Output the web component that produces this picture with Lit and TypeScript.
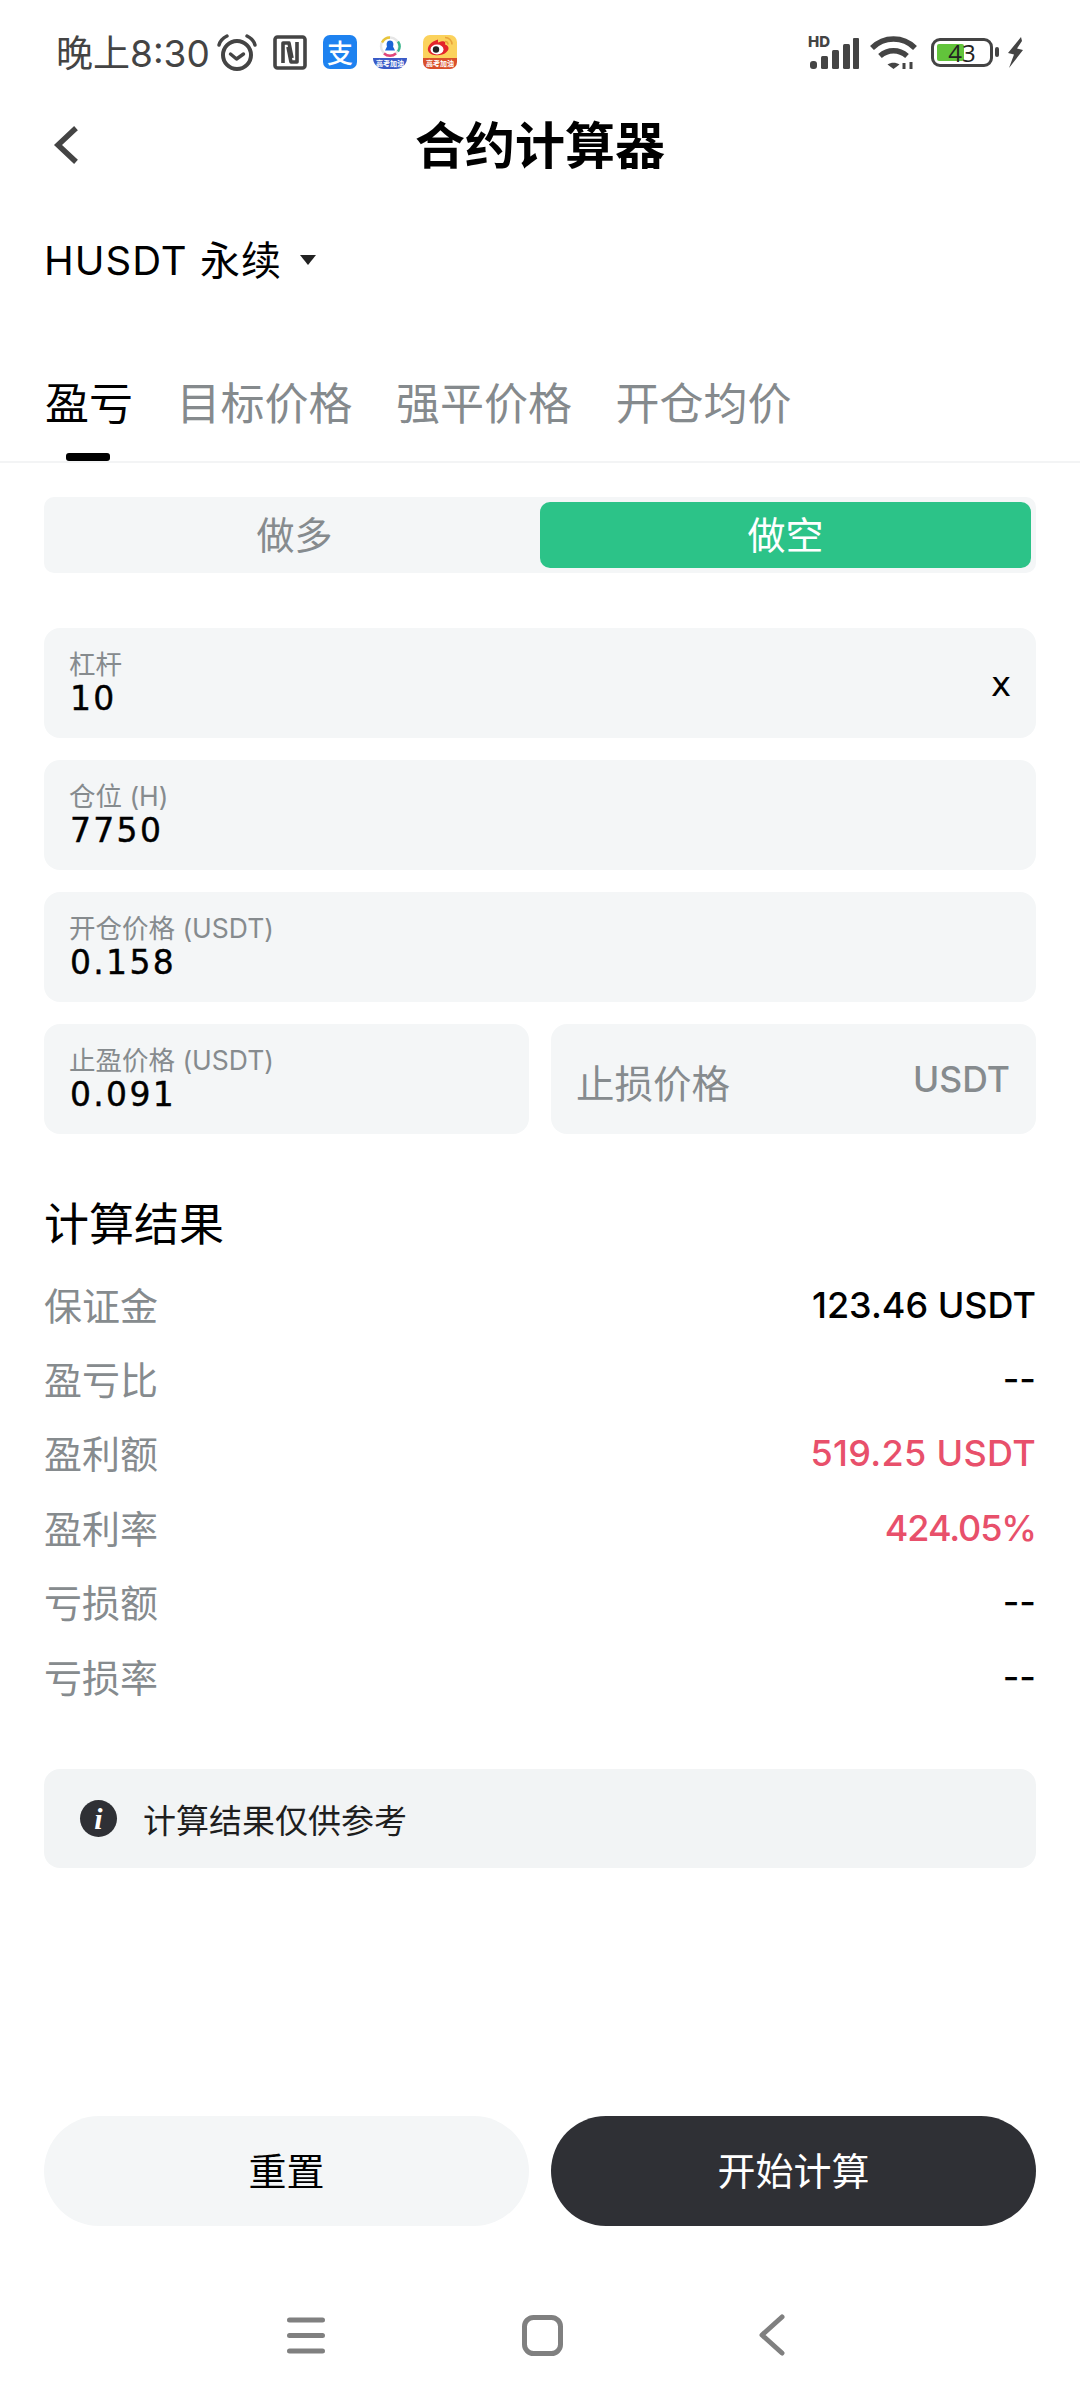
import { LitElement, css, html } from "lit";
import { customElement } from "lit/decorators.js";

const CJK = css`"Noto Sans CJK SC"`;

const alarmIcon = html`<svg width="40" height="37" viewBox="0 0 40 37" fill="none" stroke="#444" stroke-linecap="round">
  <circle cx="20" cy="21" r="14" stroke-width="4"/>
  <path d="M13.500 20l6 5 7-5" stroke-width="3.400" stroke-linejoin="round"/>
  <path d="M2 11c1-4 4-7 8-9M38 11c-1-4-4-7-8-9" stroke-width="3.400"/>
</svg>`;

const nfcIcon = html`<svg width="34" height="35" viewBox="0 0 34 35" fill="none" stroke="#444" stroke-width="3.600" stroke-linejoin="round">
  <rect x="2" y="2" width="30" height="31" rx="2.500"/>
  <path d="M10 28V8h6l3 15"/>
  <path d="M24 7v20h-6l-3-15"/>
</svg>`;

const signalIcon = html`<svg class="signal" width="52" height="36" viewBox="0 -4 52 36" fill="#444">
  <rect x="2" y="24" width="7" height="8" rx="3"/>
  <rect x="13" y="19" width="7" height="13" rx="1.500"/>
  <rect x="24" y="13" width="7" height="19" rx="1.500"/>
  <rect x="35" y="7" width="7" height="25" rx="1.500"/>
  <rect x="45" y="1" width="6" height="31" rx="1"/>
  <text x="0" y="10" font-family="Inter, sans-serif" font-size="15" font-weight="800">HD</text>
</svg>`;

const wifiIcon = html`<svg width="48" height="35" viewBox="0 0 48 35" fill="none" stroke="#444" stroke-width="5.500">
  <path d="M2 13C14 1 33 1 45 13"/>
  <path d="M10 21c8-7 19-7 27 0"/>
  <path d="M23.500 34l-6-4.500c3.500-2.500 8.500-2.500 12 0z" fill="#444" stroke="none"/>
  <path d="M34 28v6M41 27v7" stroke-width="3"/>
</svg>`;

const boltIcon = html`<svg width="17" height="31" viewBox="0 0 17 31" fill="#444">
  <path d="M14 0L1 16l6 1.500L2 31l14-18-6-1.500L15 4z"/>
</svg>`;

@customElement("app-root")
export class AppRoot extends LitElement {
  static styles = css`
    :host {
      display: flex;
      flex-direction: column;
      width: 1080px;
      height: 2400px;
      background: #fff;
      font-family: Inter, ${CJK}, sans-serif;
      color: #000;
    }
    .status {
      height: 104px;
      padding: 0 56px 0 56px;
      display: flex;
      align-items: center;
      box-sizing: border-box;
      color: #444;
    }
    .clock {
      font: 400 37px Inter, ${CJK}, sans-serif;
      width: 161px;
      margin-top: -2px;
      white-space: nowrap;
    }
    .app-icons { display: flex; align-items: center; gap: 16px; }
    .alipay {
      width: 34px; height: 34px; border-radius: 7px; background: #1e82f0;
      color: #fff; font: 500 26px/34px ${CJK}, sans-serif;
      text-align: center;
    }
    .news, .weibo {
      width: 34px; height: 34px; border-radius: 7px;
      display: flex; flex-direction: column; align-items: center; justify-content: flex-end;
      overflow: hidden; font: 700 7px ${CJK}, sans-serif; color: #fff;
    }
    .weibo { background: linear-gradient(#fbd25c 0 68%, #d9502b 68%); }
    .news { background: #fff; }
    .tag { width: 100%; height: 11px; line-height: 11px; text-align: center; white-space: nowrap; }
    .news .tag { background: #3a5bc7; border-radius: 0 0 12px 12px; }
    .sys { margin-left: auto; display: flex; align-items: center; gap: 10px; }
    .signal { margin-top: -3px; }
    .batt-wrap { display: flex; align-items: center; margin-left: 3px; }
    .battery {
      width: 62px; height: 29px; box-sizing: border-box;
      border: 3.500px solid #444; border-radius: 9px; position: relative;
      font: 400 24px "Open Sans", sans-serif; color: #222;
      display: flex; align-items: center; justify-content: center;
    }
    .battery .fill {
      position: absolute; left: 3px; top: 3px; bottom: 3px; width: 27px;
      background: #62c43b; border-radius: 2px;
    }
    .battery span { position: relative; }
    .nub { width: 4px; height: 10px; background: #444; border-radius: 2px; margin: 0 8px 0 2px; }

    .head {
      height: 82px;
      padding: 0 44px;
      display: grid;
      grid-template-columns: 1fr auto 1fr;
      align-items: center;
    }
    .back { margin-left: 7px; }
    .title { font: 700 50px ${CJK}, sans-serif; margin-top: -7px; }
    .symbol {
      margin: 42px 44px 0;
      height: 60px;
      display: flex;
      align-items: center;
      font: 400 40px Inter, ${CJK}, sans-serif;
      letter-spacing: 1px;
    }
    .symbol i {
      margin-left: 18px; margin-top: 4px;
      border: 8px solid transparent; border-top: 10px solid #222; border-bottom: 0;
    }
    .tabs {
      margin-top: 55px;
      height: 120px;
      box-sizing: border-box;
      padding: 0 45px;
      border-bottom: 2px solid #f3f4f5;
      display: flex;
      gap: 43.500px;
      font: 400 44px ${CJK}, sans-serif;
      color: #858a8d;
    }
    .tab { position: relative; height: 118px; line-height: 117px; white-space: nowrap; }
    .tab.on { color: #000; }
    .tab.on::after {
      content: ""; position: absolute; left: 21px; bottom: 0;
      width: 44px; height: 8px; border-radius: 3px; background: #000;
    }
    main { padding: 34px 44px 0; display: flex; flex-direction: column; flex: 1; }
    .toggle {
      height: 76px; padding: 5px 5px; box-sizing: border-box;
      background: #f4f6f7; border-radius: 10px;
      display: grid; grid-template-columns: 1fr 1fr;
      font: 400 38px ${CJK}, sans-serif; color: #868b8e; text-align: center;
    }
    .toggle div { line-height: 62px; height: 66px; border-radius: 10px; }
    .toggle .on { background: #2cc388; color: #fff; }
    .fields {
      margin-top: 55px;
      display: grid; grid-template-columns: 485px 485px; gap: 22px;
    }
    .field {
      height: 110px; box-sizing: border-box; padding: 21px 26px 0 25px;
      background: #f4f6f7; border-radius: 16px; position: relative;
    }
    .wide { grid-column: 1 / 3; }
    .lbl { font: 400 26.500px/30px Inter, ${CJK}, sans-serif; color: #868b8e; }
    .val {
      font: 400 33px/36px "DejaVu Sans", sans-serif; letter-spacing: 2.300px;
      margin: 2px 0 0 1px; -webkit-text-stroke: 0.4px #000;
    }
    .unit-x { position: absolute; right: 25px; top: 36px; font: 500 34px "DejaVu Sans", sans-serif; }
    .ph {
      height: 114px; display: flex; align-items: center; justify-content: space-between;
      margin-top: -21px;
      font: 400 38.500px ${CJK}, sans-serif; color: #868b8e;
    }
    .ph b { font: 500 35.500px Inter, sans-serif; margin-top: -4px; }
    h2 { margin: 62px 0 0; font: 400 45px/52px ${CJK}, sans-serif; }
    .rows { margin-top: 18px; }
    .row {
      height: 74.400px; display: flex; align-items: center; justify-content: space-between;
      font: 400 38px ${CJK}, sans-serif; color: #868b8e;
    }
    .row b { font: 500 36px Inter, sans-serif; color: #000; margin-top: 3px; }
    .row b.red { color: #e8506b; letter-spacing: 0.300px; }
    .row b.pct { letter-spacing: -1.100px; }
    .note {
      margin-top: 57px; height: 99px; padding: 0 36px;
      background: #f2f4f5; border-radius: 16px;
      display: flex; align-items: center; gap: 26px;
      font: 400 33px ${CJK}, sans-serif; color: #1e1e1e;
    }
    .info {
      width: 37px; height: 37px; border-radius: 50%; background: #2f3035; color: #fff;
      font: italic 700 30px/37px "Liberation Serif", serif; text-align: center; flex: none;
    }
    .btns { margin-top: auto; display: grid; grid-template-columns: 485px 485px; gap: 22px; }
    .btn {
      height: 110px; border-radius: 55px; text-align: center;
      background: #f4f6f7; font: 400 38px/106px ${CJK}, sans-serif;
    }
    .btn.dark { background: #2f3035; color: #fff; }
    .nav {
      height: 174px; box-sizing: border-box; padding: 44px 295px 0 287px;
      display: flex; align-items: center; justify-content: space-between;
    }
    .nav svg { display: block; }
  `;

  private field(label: string, value: string, wide = true, extra?: unknown) {
    return html`<div class="field ${wide ? "wide" : ""}">
      <div class="lbl">${label}</div>
      <div class="val">${value}</div>
      ${extra}
    </div>`;
  }

  render() {
    const rows: [string, string, string][] = [
      ["保证金", "123.46 USDT", ""],
      ["盈亏比", "--", ""],
      ["盈利额", "519.25 USDT", "red"],
      ["盈利率", "424.05%", "red pct"],
      ["亏损额", "--", ""],
      ["亏损率", "--", ""],
    ];
    return html`
      <div class="status">
        <span class="clock">晚上8:30</span>
        <div class="app-icons">
          ${alarmIcon} ${nfcIcon}
          <div class="alipay">支</div>
          <div class="news">
            <svg width="22" height="23" viewBox="0 0 22 22" fill="none">
              <circle cx="11" cy="11" r="9" stroke="#e6e6e6" stroke-width="2.400"/>
              <path d="M3 7a9 9 0 0 1 8-5" stroke="#e8c53a" stroke-width="2.400"/>
              <path d="M19 6a9 9 0 0 1 0 10" stroke="#38b48b" stroke-width="2.400"/>
              <path d="M5 18a9 9 0 0 0 12 0" stroke="#e0457b" stroke-width="2.400"/>
              <path d="M11 5c3 0 4 3 3 6l2 4H6l2-4c-1-3 0-6 3-6z" fill="#1b63d6"/>
            </svg>
            <div class="tag">高考加油</div>
          </div>
          <div class="weibo">
            <svg width="30" height="23" viewBox="0 0 30 22">
              <path d="M13 4C6 6 2 11 3 15c2 6 14 6 18 2 4-3 3-7-1-8 1-3-1-4-4-3l-3 1z" fill="#e3242b"/>
              <ellipse cx="12" cy="14" rx="6.500" ry="5" fill="#fff"/>
              <circle cx="11" cy="14" r="3.200" fill="#222"/>
              <path d="M20 2c4 0 7 3 7 7M20 6c2 0 3 1 3 3" stroke="#e9a33a" stroke-width="1.600" fill="none"/>
            </svg>
            <div class="tag">高考加油</div>
          </div>
        </div>
        <div class="sys">
          ${signalIcon} ${wifiIcon}
          <div class="batt-wrap">
            <div class="battery"><div class="fill"></div><span>43</span></div>
            <div class="nub"></div>
            ${boltIcon}
          </div>
        </div>
      </div>

      <div class="head">
        <svg class="back" width="30" height="40" viewBox="0 0 30 40" fill="none" stroke="#444" stroke-width="5.500" stroke-linecap="square">
          <path d="M23 5L7 20l16 15"/>
        </svg>
        <div class="title">合约计算器</div>
        <div></div>
      </div>

      <div class="symbol">HUSDT 永续<i></i></div>

      <div class="tabs">
        <div class="tab on">盈亏</div>
        <div class="tab">目标价格</div>
        <div class="tab">强平价格</div>
        <div class="tab">开仓均价</div>
      </div>

      <main>
        <div class="toggle">
          <div>做多</div>
          <div class="on">做空</div>
        </div>

        <div class="fields">
          ${this.field("杠杆", "10", true, html`<span class="unit-x">x</span>`)}
          ${this.field("仓位 (H)", "7750")}
          ${this.field("开仓价格 (USDT)", "0.158")}
          ${this.field("止盈价格 (USDT)", "0.091", false)}
          <div class="field">
            <div class="ph"><span>止损价格</span><b>USDT</b></div>
          </div>
        </div>

        <h2>计算结果</h2>
        <div class="rows">
          ${rows.map(
            ([k, v, cls]) => html`<div class="row">
              <span>${k}</span><b class=${cls}>${v}</b>
            </div>`
          )}
        </div>

        <div class="note">
          <div class="info">i</div>
          <span>计算结果仅供参考</span>
        </div>

        <div class="btns">
          <div class="btn">重置</div>
          <div class="btn dark">开始计算</div>
        </div>
      </main>

      <div class="nav">
        <svg width="38" height="37" viewBox="0 0 38 37" fill="none" stroke="#808080" stroke-width="5" stroke-linecap="round">
          <path d="M2.500 3h33M2.500 18.500h33M2.500 34h33"/>
        </svg>
        <svg width="41" height="41" viewBox="0 0 41 41" fill="none" stroke="#808080" stroke-width="5">
          <rect x="2.500" y="2.500" width="36" height="36" rx="9"/>
        </svg>
        <svg width="26" height="42" viewBox="0 0 26 42" fill="none" stroke="#808080" stroke-width="5" stroke-linecap="round" stroke-linejoin="round">
          <path d="M23 3L3 21l20 18"/>
        </svg>
      </div>
    `;
  }
}
